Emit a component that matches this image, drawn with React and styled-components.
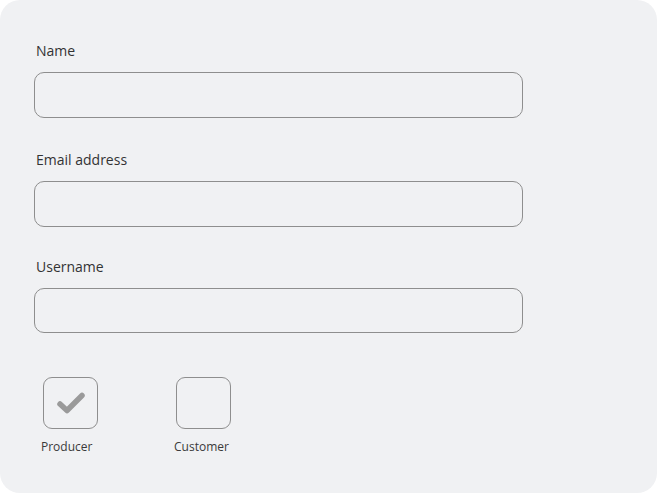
import React from 'react'
import styled, { createGlobalStyle } from 'styled-components'

const GlobalStyle = createGlobalStyle`
  html, body { margin: 0; padding: 0; background: #ffffff; }
  body { font-family: "Open Sans", "Noto Sans", sans-serif; }
`

const Card = styled.div`
  width: 657px;
  height: 493px;
  box-sizing: border-box;
  background: #f0f1f3;
  border-radius: 20px;
  padding: 42px 0 0 34px;
`

const Field = styled.div`
  display: flex;
  flex-direction: column;
  margin-bottom: ${p => p.gap || '32px'};
`

const Label = styled.label`
  font-size: 14px;
  line-height: 18px;
  color: #333;
  padding-left: 2px;
  margin-bottom: 12px;
`

const Input = styled.input`
  width: 489px;
  height: ${p => p.h || '46px'};
  box-sizing: border-box;
  border: 1px solid #8e8e8e;
  border-radius: 10px;
  background: transparent;
  outline: none;
`

const Options = styled.div`
  display: flex;
  margin-top: 44px;
  margin-left: 9px;
`

const Option = styled.div`
  width: 64px;
  display: flex;
  flex-direction: column;
  align-items: flex-start;
  margin-right: ${p => p.mr || '0'};
`

const Box = styled.div`
  width: 55px;
  height: 52px;
  box-sizing: border-box;
  border: 1px solid #8e8e8e;
  border-radius: 9px;
  display: flex;
  align-items: center;
  justify-content: center;
`

const OptionLabel = styled.span`
  margin-top: 10px;
  margin-left: -2px;
  font-size: 12px;
  line-height: 16px;
  color: #3a3a3a;
  white-space: nowrap;
`

const Check = () => (
  <svg width="30" height="24" viewBox="0 0 30 24">
    <path d="M4 13 L11 19.5 L26 4.5" fill="none" stroke="#9a9a9a" strokeWidth="5.5" strokeLinecap="round" strokeLinejoin="round" />
  </svg>
)

const App = () => (
  <>
    <GlobalStyle />
    <Card>
      <Field gap="33px">
        <Label>Name</Label>
        <Input />
      </Field>
      <Field gap="31px">
        <Label>Email address</Label>
        <Input />
      </Field>
      <Field gap="0">
        <Label>Username</Label>
        <Input h="45px" />
      </Field>
      <Options>
        <Option mr="69px">
          <Box><Check /></Box>
          <OptionLabel>Producer</OptionLabel>
        </Option>
        <Option>
          <Box />
          <OptionLabel>Customer</OptionLabel>
        </Option>
      </Options>
    </Card>
  </>
)

export default App
